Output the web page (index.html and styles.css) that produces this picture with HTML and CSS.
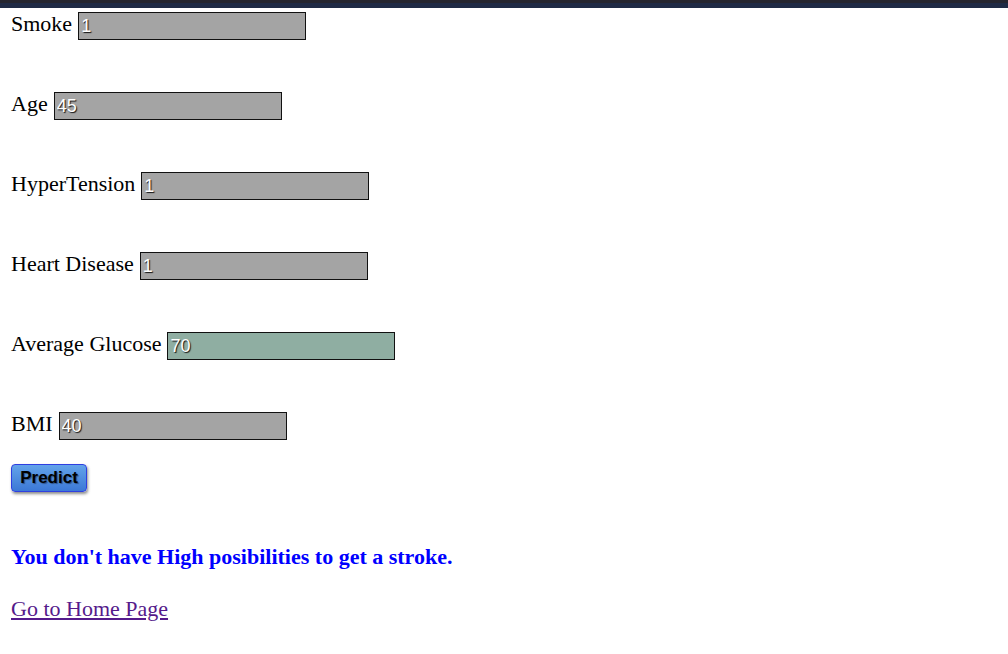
FILE: index.html
```html
<!DOCTYPE html>
<html>
<head>
<meta charset="utf-8">
<link rel="stylesheet" href="styles.css">
</head>
<body>
<div class="topbar"></div>
<main class="page">
  <form class="form">
    <div class="row"><label>Smoke</label><input class="field" type="text" value="1"></div>
    <div class="row"><label>Age</label><input class="field" type="text" value="45"></div>
    <div class="row"><label>HyperTension</label><input class="field" type="text" value="1"></div>
    <div class="row"><label>Heart Disease</label><input class="field" type="text" value="1"></div>
    <div class="row"><label>Average Glucose</label><input class="field focused" type="text" value="70"></div>
    <div class="row"><label>BMI</label><input class="field" type="text" value="40"></div>
    <button class="predict" type="button">Predict</button>
  </form>
  <h2 class="result">You don't have High posibilities to get a stroke.</h2>
  <a class="home" href="#">Go to Home Page</a>
</main>
</body>
</html>
```

FILE: styles.css
```css
html, body {
  margin: 0;
  padding: 0;
  background: #ffffff;
}
body {
  font-family: "Liberation Serif", "Times New Roman", serif;
  font-size: 22px;
  color: #000;
}
.topbar {
  height: 8px;
  background: linear-gradient(to bottom, #25252f 0, #25252f 3px, #1f2a45 3px, #1f2a45 8px);
}
.page {
  padding: 4px 0 0 11px;
  display: flex;
  flex-direction: column;
  align-items: flex-start;
}
.form {
  display: flex;
  flex-direction: column;
  align-items: flex-start;
  gap: 52px;
}
.row {
  display: flex;
  align-items: center;
  height: 28px;
  gap: 6px;
}
.row label {
  line-height: 25px;
  padding-bottom: 6px;
}
.field {
  box-sizing: border-box;
  width: 228px;
  height: 28px;
  margin: 0;
  padding: 1px 2px 0 2px;
  border: 1px solid #111;
  background: #a4a4a4;
  color: #fff;
  font-family: "Liberation Sans", Arial, sans-serif;
  font-size: 18px;
  text-shadow: 1px 1px 1px #111;
  outline: none;
}
.field.focused {
  background: #8faea2;
}
.predict {
  margin-top: -28px;
  box-sizing: border-box;
  width: 76px;
  height: 28px;
  padding: 0;
  border: 1px solid #2f3fe0;
  border-radius: 4px;
  background: linear-gradient(to bottom, #63a3ea, #3c78d6);
  box-shadow: 1px 2px 3px rgba(0,0,0,0.45);
  color: #000;
  font-family: "Liberation Sans", Arial, sans-serif;
  font-size: 17px;
  font-weight: bold;
  text-shadow: 1px 1px 1px rgba(0,0,0,0.4);
}
.result {
  margin: 52px 0 0 0;
  font-size: 22px;
  font-weight: bold;
  line-height: 25px;
  color: #0000ff;
}
.home {
  margin-top: 27px;
  line-height: 25px;
  color: #551a8b;
  text-decoration: underline;
}
```
